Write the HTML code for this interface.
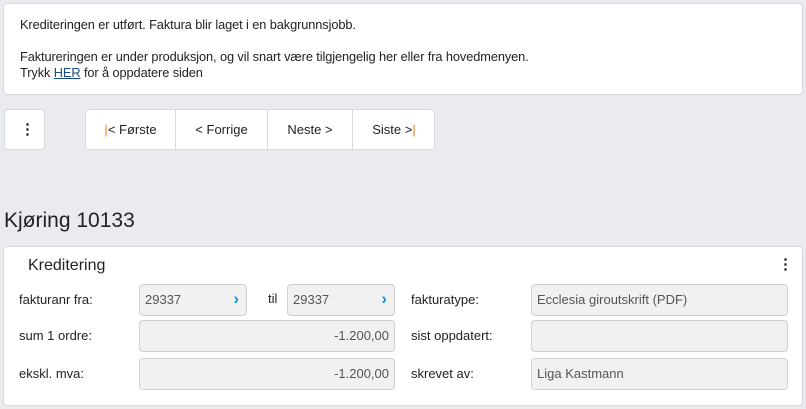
<!DOCTYPE html>
<html><head><style>
*{box-sizing:border-box;margin:0;padding:0}
body{width:806px;height:409px;background:#e9ebee;font-family:"Liberation Sans",sans-serif;font-size:13px;color:#222;position:relative;overflow:hidden}
.abs{position:absolute}
.box{background:#fff;border:1px solid #d6d9dd;border-radius:4px}
.inp{position:absolute;background:#f1f1f1;border:1px solid #d0d0d0;border-radius:4px;height:32px;line-height:30px;padding:0 5px;color:#555;font-size:13px}
.lbl{position:absolute;font-size:13px;color:#222}
.chev{position:absolute;right:7px;top:-1px;color:#1a8fd0;font-weight:bold;font-size:17px}
.nav div{position:absolute;top:0;height:40px;line-height:40px;text-align:center;font-size:13px;border-right:1px solid #d6d9dd}
.dots{position:absolute;font-size:15px;font-weight:bold;line-height:1}
</style></head><body>
<div class="abs box" style="left:3px;top:3px;width:800px;height:92px;padding:13px 16px;line-height:16px;font-size:12.8px;letter-spacing:-0.1px">
Krediteringen er utført. Faktura blir laget i en bakgrunnsjobb.<br><br>
Faktureringen er under produksjon, og vil snart være tilgjengelig her eller fra hovedmenyen.<br>
Trykk <span style="color:#1a4a8a;text-decoration:underline">HER</span> for å oppdatere siden
</div>
<div class="abs box" style="left:4px;top:109px;width:41px;height:41px"><span class="dots" style="left:15px;top:12px">&#8942;</span></div>
<div class="abs box nav" style="left:85px;top:109px;width:350px;height:41px">
<div style="left:0;width:90px"><span style="color:#e08a2a">|</span>&lt; Første</div>
<div style="left:90px;width:92px">&lt; Forrige</div>
<div style="left:182px;width:85px">Neste &gt;</div>
<div style="left:267px;width:82px;border-right:none">Siste &gt;<span style="color:#e08a2a">|</span></div>
</div>
<div class="abs" style="left:4px;top:209px;font-size:21px;color:#222">Kjøring 10133</div>
<div class="abs box" style="left:3px;top:246px;width:800px;height:160px">
<div class="abs" style="left:24px;top:10px;font-size:16px">Kreditering</div>
<span class="dots" style="left:774px;top:10px">&#8942;</span>
</div>
<div class="lbl" style="left:19px;top:292px">fakturanr fra:</div>
<div class="inp" style="left:139px;top:284px;width:108px">29337<span class="chev">&#8250;</span></div>
<div class="lbl" style="left:268px;top:291px">til</div>
<div class="inp" style="left:287px;top:284px;width:108px">29337<span class="chev">&#8250;</span></div>
<div class="lbl" style="left:19px;top:328px">sum 1 ordre:</div>
<div class="inp" style="left:139px;top:320px;width:256px;text-align:right">-1.200,00</div>
<div class="lbl" style="left:19px;top:366px">ekskl. mva:</div>
<div class="inp" style="left:139px;top:358px;width:256px;text-align:right">-1.200,00</div>
<div class="lbl" style="left:411px;top:292px">fakturatype:</div>
<div class="inp" style="left:531px;top:284px;width:257px">Ecclesia giroutskrift (PDF)</div>
<div class="lbl" style="left:411px;top:328px">sist oppdatert:</div>
<div class="inp" style="left:531px;top:320px;width:257px"></div>
<div class="lbl" style="left:411px;top:366px">skrevet av:</div>
<div class="inp" style="left:531px;top:358px;width:257px">Liga Kastmann</div>
</body></html>
